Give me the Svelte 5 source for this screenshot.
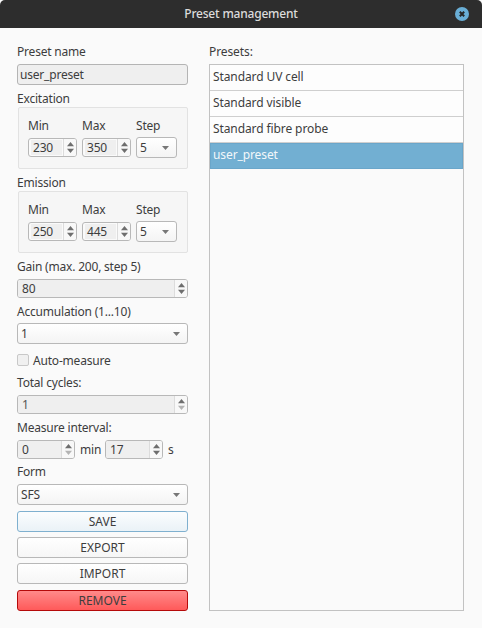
<script>
  const presets = ['Standard UV cell', 'Standard visible', 'Standard fibre probe', 'user_preset'];
  const groups = [
    { title: 'Excitation', min: 230, max: 350, step: 5 },
    { title: 'Emission', min: 250, max: 445, step: 5 }
  ];
</script>

{#snippet arrows(dim = false)}
  <span class="arrows">
    <svg width="9" height="15" viewBox="0 0 9 15">
      <path d="M4.5 2 L8 6.2 H1 Z" fill="#6e6e6e" />
      <path d="M4.5 13 L8 8.8 H1 Z" fill={dim ? '#b4b4b4' : '#6e6e6e'} />
    </svg>
  </span>
{/snippet}

{#snippet caret()}
  <svg class="caret" width="7" height="4" viewBox="0 0 7 4"><path d="M0 0 H7 L3.5 4 Z" fill="#777" /></svg>
{/snippet}

<div class="window">
  <header class="titlebar">
    <span class="title">Preset management</span>
    <span class="close">
      <svg width="14" height="14" viewBox="0 0 14 14"><circle cx="7" cy="7" r="7" fill="#69aed6" /><path d="M4.8 4.8 L9.2 9.2 M9.2 4.8 L4.8 9.2" stroke="#262626" stroke-width="2" /></svg>
    </span>
  </header>

  <main class="content">
    <section class="left">
      <div class="label first">Preset name</div>
      <div class="textfield">user_preset</div>

      {#each groups as g}
        <div class="label group-label">{g.title}</div>
        <div class="group">
          <div class="cell w49"><span class="cap">Min</span><div class="spin"><span class="val pad">{g.min}</span>{@render arrows()}</div></div>
          <div class="cell w49"><span class="cap">Max</span><div class="spin"><span class="val pad">{g.max}</span>{@render arrows()}</div></div>
          <div class="cell w41"><span class="cap">Step</span><div class="select small"><span>{g.step}</span>{@render caret()}</div></div>
        </div>
      {/each}

      <div class="label gain">Gain (max. 200, step 5)</div>
      <div class="spin"><span class="val">80</span>{@render arrows()}</div>

      <div class="label acc">Accumulation (1...10)</div>
      <div class="select"><span>1</span>{@render caret()}</div>

      <div class="check"><span class="box"></span><span>Auto-measure</span></div>

      <div class="label total">Total cycles:</div>
      <div class="spin disabled"><span class="val">1</span>{@render arrows(true)}</div>

      <div class="label interval">Measure interval:</div>
      <div class="interval-row">
        <div class="spin w58"><span class="val">0</span>{@render arrows(true)}</div>
        <span class="unit min">min</span>
        <div class="spin w58"><span class="val">17</span>{@render arrows()}</div>
        <span class="unit">s</span>
      </div>

      <div class="label form">Form</div>
      <div class="select"><span>SFS</span>{@render caret()}</div>

      <button class="btn save">SAVE</button>
      <button class="btn">EXPORT</button>
      <button class="btn">IMPORT</button>
      <button class="btn remove">REMOVE</button>
    </section>

    <section class="right">
      <div class="label first">Presets:</div>
      <ul class="list">
        {#each presets as p, i}
          <li class:selected={i === 3}>{p}</li>
        {/each}
      </ul>
    </section>
  </main>
</div>

<style>
  :global(body) { margin: 0; background: #fafafa; }
  .window {
    width: 482px; height: 628px; display: flex; flex-direction: column;
    font-family: "Noto Sans", "Open Sans", sans-serif; font-size: 12px; color: #3d3d3d;
    background: #fafafa; overflow: hidden; letter-spacing: -0.1px;
  }
  .titlebar {
    height: 28px; flex: none; background: #2d2d2d; border-radius: 5px 5px 0 0;
    display: flex; align-items: center; justify-content: center; position: relative;
  }
  .title { color: #dcdcdc; font-size: 12px; font-weight: 500; letter-spacing: -0.2px; position: relative; top: -1px; }
  .close { position: absolute; left: 455px; top: 7px; width: 14px; height: 14px; display: flex; }
  .content { display: flex; flex: 1; padding: 0 18px 0 17px; gap: 21px; }
  .left { width: 171px; display: flex; flex-direction: column; letter-spacing: -0.2px; }
  .right { flex: 1; display: flex; flex-direction: column; }
  .label { height: 17px; line-height: 17px; white-space: nowrap; }
  .first { margin-top: 15px; margin-bottom: 4px; }
  .group-label { margin-top: 5px; }
  .textfield {
    height: 21px; box-sizing: border-box; line-height: 19px; padding: 0 2px; border: 1px solid #b4b4b4;
    border-radius: 3px; background: #efefef;
  }
  .group {
    margin-left: 1px; height: 62px; box-sizing: border-box; border: 1px solid #e2e2e2; border-radius: 2px;
    background: #f6f6f6; display: flex; gap: 5px; padding: 0 10px 0 9px;
  }
  .cell { display: flex; flex-direction: column; }
  .w49 { width: 49px; }
  .w41 { width: 41px; }
  .cap { height: 17px; line-height: 17px; margin-top: 9px; margin-bottom: 4px; }
  .spin {
    height: 19px; box-sizing: border-box; border: 1px solid #b8b8b8; border-radius: 3px; background: #fafafa;
    display: flex; align-items: stretch; overflow: hidden; flex: none;
  }
  .val { flex: 1; background: #efefef; padding-left: 4px; line-height: 17px; min-width: 0; }
  .pad { margin: 1px 1px 1px 2px; padding-left: 2px; line-height: 15px; }
  .arrows {
    width: 12px; flex: none; border-left: 1px solid #dcdcdc; display: flex; align-items: center;
    justify-content: center; background: #f8f8f8;
  }
  .select {
    height: 21px; box-sizing: border-box; border: 1px solid #b8b8b8; border-radius: 3px; flex: none;
    background: linear-gradient(#ffffff, #f4f4f4); display: flex; align-items: center; justify-content: space-between;
    padding: 0 7px 0 3px;
  }
  .small { margin-top: -1px; }
  .caret { flex: none; }
  .gain { margin-top: 5px; margin-bottom: 4px; }
  .acc { margin-top: 5px; margin-bottom: 3px; }
  .check { margin-top: 10px; height: 12px; display: flex; align-items: center; gap: 4px; }
  .box {
    width: 12px; height: 12px; box-sizing: border-box; border: 1px solid #c8c8c8; border-radius: 2px;
    background: #f0f0f0; flex: none;
  }
  .total { margin-top: 8px; margin-bottom: 4px; }
  .disabled .val { color: #565656; }
  .interval { margin-top: 5px; margin-bottom: 4px; }
  .interval-row { display: flex; align-items: center; gap: 5px; height: 19px; }
  .w58 { width: 58px; }
  .unit { line-height: 19px; }
  .min { width: 20px; }
  .form { margin-top: 4px; margin-bottom: 4px; }
  .btn {
    display: block; width: 100%; height: 21px; box-sizing: border-box; margin: 5px 0 0; padding: 0; flex: none;
    font: inherit; letter-spacing: 0; color: #3d3d3d; border: 1px solid #b8b8b8; border-radius: 3px;
    background: linear-gradient(#ffffff, #f6f6f6); line-height: 18px;
  }
  .save { margin-top: 6px; border-color: #7fb0cf; background: linear-gradient(#fbfdfe, #eaf2f7); }
  .remove { margin-top: 6px; border-color: #b50a0a; background: linear-gradient(#ff8a8a, #ff5a5a); }
  .list {
    list-style: none; margin: 0; padding: 0; height: 547px; box-sizing: border-box;
    border: 1px solid #c2c2c2; background: #fafafa;
  }
  .list li {
    height: 26px; box-sizing: border-box; border-bottom: 1px solid #cfcfcf; background: #fdfdfd;
    padding-left: 3px; line-height: 23px;
  }
  .list li.selected {
    background: #72afd2; color: #f2f7fa; border: 1px solid #6aa6ca; padding-left: 2px; line-height: 22px;
  }
</style>
